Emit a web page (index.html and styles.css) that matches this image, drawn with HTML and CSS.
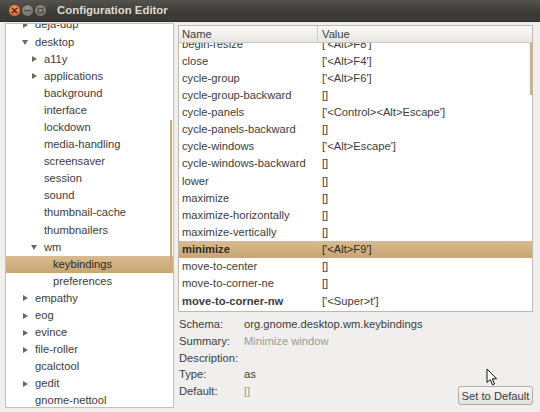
FILE: index.html
```html
<!DOCTYPE html>
<html>
<head>
<meta charset="utf-8">
<title>Configuration Editor</title>
<link rel="stylesheet" href="styles.css">
</head>
<body>
<div class="window">
  <div class="titlebar">
    <div class="wbuttons">
      <svg class="wbtn" width="13" height="13" viewBox="0 0 13 13">
        <defs>
          <radialGradient id="gc" cx="50%" cy="35%" r="65%"><stop offset="0" stop-color="#f7a073"/><stop offset="1" stop-color="#d9602a"/></radialGradient>
          <radialGradient id="gg" cx="50%" cy="35%" r="65%"><stop offset="0" stop-color="#9a9791"/><stop offset="1" stop-color="#6e6c67"/></radialGradient>
        </defs>
        <circle cx="6.5" cy="6.5" r="6" fill="url(#gc)" stroke="#3a2a20" stroke-width="0.6"/>
        <path d="M4.3 4.3 L8.7 8.7 M8.7 4.3 L4.3 8.7" stroke="#4a2a1a" stroke-width="1.5" stroke-linecap="round"/>
      </svg>
      <svg class="wbtn" width="13" height="13" viewBox="0 0 13 13">
        <circle cx="6.5" cy="6.5" r="6" fill="url(#gg)" stroke="#2f2e2b" stroke-width="0.6"/>
        <path d="M4 6.5 H9" stroke="#4a4944" stroke-width="1.7" stroke-linecap="round"/>
      </svg>
      <svg class="wbtn" width="13" height="13" viewBox="0 0 13 13">
        <circle cx="6.5" cy="6.5" r="6" fill="url(#gg)" stroke="#2f2e2b" stroke-width="0.6"/>
        <rect x="4.3" y="4.3" width="4.4" height="4.4" fill="none" stroke="#4a4944" stroke-width="1.3"/>
      </svg>
    </div>
    <div class="title">Configuration Editor</div>
  </div>

  <div class="content">
    <div class="tree-pane">
      <div class="tree-list">
        <div class="trow l0"><span class="exp"><i class="arr-right"></i></span>deja-dup</div>
        <div class="trow l0"><span class="exp"><i class="arr-down"></i></span>desktop</div>
        <div class="trow l1"><span class="exp"><i class="arr-right"></i></span>a11y</div>
        <div class="trow l1"><span class="exp"><i class="arr-right"></i></span>applications</div>
        <div class="trow l1"><span class="exp"></span>background</div>
        <div class="trow l1"><span class="exp"></span>interface</div>
        <div class="trow l1"><span class="exp"></span>lockdown</div>
        <div class="trow l1"><span class="exp"></span>media-handling</div>
        <div class="trow l1"><span class="exp"></span>screensaver</div>
        <div class="trow l1"><span class="exp"></span>session</div>
        <div class="trow l1"><span class="exp"></span>sound</div>
        <div class="trow l1"><span class="exp"></span>thumbnail-cache</div>
        <div class="trow l1"><span class="exp"></span>thumbnailers</div>
        <div class="trow l1"><span class="exp"><i class="arr-down"></i></span>wm</div>
        <div class="trow l2 selected"><span class="exp"></span>keybindings</div>
        <div class="trow l2"><span class="exp"></span>preferences</div>
        <div class="trow l0"><span class="exp"><i class="arr-right"></i></span>empathy</div>
        <div class="trow l0"><span class="exp"><i class="arr-right"></i></span>eog</div>
        <div class="trow l0"><span class="exp"><i class="arr-right"></i></span>evince</div>
        <div class="trow l0"><span class="exp"><i class="arr-right"></i></span>file-roller</div>
        <div class="trow l0"><span class="exp"></span>gcalctool</div>
        <div class="trow l0"><span class="exp"><i class="arr-right"></i></span>gedit</div>
        <div class="trow l0"><span class="exp"></span>gnome-nettool</div>
      </div>
      <div class="tree-thumb"></div>
    </div>

    <div class="right">
      <div class="table">
        <div class="thead">
          <div class="th th-name">Name</div>
          <div class="th th-value">Value</div>
        </div>
        <div class="tbody">
          <div class="tbody-inner">
            <div class="row"><span class="c-name">begin-resize</span><span class="c-value">['&lt;Alt&gt;F8']</span></div>
            <div class="row"><span class="c-name">close</span><span class="c-value">['&lt;Alt&gt;F4']</span></div>
            <div class="row"><span class="c-name">cycle-group</span><span class="c-value">['&lt;Alt&gt;F6']</span></div>
            <div class="row"><span class="c-name">cycle-group-backward</span><span class="c-value">[]</span></div>
            <div class="row"><span class="c-name">cycle-panels</span><span class="c-value">['&lt;Control&gt;&lt;Alt&gt;Escape']</span></div>
            <div class="row"><span class="c-name">cycle-panels-backward</span><span class="c-value">[]</span></div>
            <div class="row"><span class="c-name">cycle-windows</span><span class="c-value">['&lt;Alt&gt;Escape']</span></div>
            <div class="row"><span class="c-name">cycle-windows-backward</span><span class="c-value">[]</span></div>
            <div class="row"><span class="c-name">lower</span><span class="c-value">[]</span></div>
            <div class="row"><span class="c-name">maximize</span><span class="c-value">[]</span></div>
            <div class="row"><span class="c-name">maximize-horizontally</span><span class="c-value">[]</span></div>
            <div class="row"><span class="c-name">maximize-vertically</span><span class="c-value">[]</span></div>
            <div class="row selected"><span class="c-name bold">minimize</span><span class="c-value">['&lt;Alt&gt;F9']</span></div>
            <div class="row"><span class="c-name">move-to-center</span><span class="c-value">[]</span></div>
            <div class="row"><span class="c-name">move-to-corner-ne</span><span class="c-value">[]</span></div>
            <div class="row"><span class="c-name bold">move-to-corner-nw</span><span class="c-value">['&lt;Super&gt;t']</span></div>
          </div>
          <div class="table-thumb"></div>
        </div>
      </div>

      <div class="info">
        <div class="info-grid">
          <div class="lbl">Schema:</div><div class="val">org.gnome.desktop.wm.keybindings</div>
          <div class="lbl">Summary:</div><div class="val dim">Minimize window</div>
          <div class="lbl">Description:</div><div class="val"></div>
          <div class="lbl">Type:</div><div class="val">as</div>
          <div class="lbl">Default:</div><div class="val dim">[]</div>
        </div>
        <button class="btn">Set to Default</button>
      </div>
    </div>
  </div>

  <svg class="cursor" width="12" height="18" viewBox="0 0 12 18">
    <path d="M1 1 L1 14.5 L4.2 11.6 L6.6 16.8 L8.6 15.9 L6.3 10.8 L10.6 10.8 Z" fill="#ffffff" stroke="#111" stroke-width="1" stroke-linejoin="round"/>
  </svg>
</div>
</body>
</html>
```

FILE: styles.css
```css
* { box-sizing: border-box; }

html, body {
  margin: 0;
  padding: 0;
}

body {
  width: 540px;
  height: 412px;
  overflow: hidden;
  font-family: "Liberation Sans", Arial, sans-serif;
  font-size: 11.2px;
  color: #3c3c3c;
  background: #efedeb;
}

.window {
  position: relative;
  width: 540px;
  height: 412px;
  display: flex;
  flex-direction: column;
  background: #f0efed;
}

/* title bar */
.titlebar {
  height: 22px;
  flex: none;
  display: flex;
  align-items: center;
  padding-left: 8px;
  background: linear-gradient(#55534e, #3c3b37 60%, #3a3935);
  border-bottom: 1px solid #2b2a27;
}

.wbuttons {
  flex: none;
  width: 39px;
  display: flex;
  gap: 0;
  margin-top: -1px;
}

.wbtn {
  display: block;
  flex: none;
}

.title {
  flex: none;
  margin-left: 10px;
  font-weight: bold;
  font-size: 11.4px;
  color: #dfdbd2;
  margin-top: -1px;
  white-space: nowrap;
}

/* content */
.content {
  flex: 1;
  display: flex;
  gap: 4px;
  padding: 1px 7px 4px 5px;
  min-height: 0;
}

/* tree */
.tree-pane {
  position: relative;
  width: 169px;
  flex: none;
  background: #ffffff;
  border: 1px solid #c4c1ba;
  overflow: hidden;
}

.tree-list {
  margin-top: -7.6px;
}

.trow {
  height: 17.1px;
  line-height: 17.1px;
  display: flex;
  align-items: center;
  white-space: nowrap;
}

.trow.l0 { padding-left: 13px; }
.trow.l1 { padding-left: 22px; }
.trow.l2 { padding-left: 31px; }

.exp {
  width: 16px;
  flex: none;
  height: 17px;
  display: flex;
  align-items: center;
  padding-left: 3px;
}

.arr-right {
  display: block;
  width: 0;
  height: 0;
  border-top: 3.5px solid transparent;
  border-bottom: 3.5px solid transparent;
  border-left: 5px solid #6a6864;
  margin-left: 1px;
}

.arr-down {
  display: block;
  width: 0;
  height: 0;
  border-left: 3.5px solid transparent;
  border-right: 3.5px solid transparent;
  border-top: 5px solid #6a6864;
}

.selected {
  background: linear-gradient(#d8bb90, #c9a572);
  color: #2e2a24;
}

.tree-thumb {
  position: absolute;
  right: 1px;
  top: 96px;
  width: 2px;
  height: 150px;
  background: #cba97c;
}

/* right side */
.right {
  flex: 1;
  display: flex;
  flex-direction: column;
  min-width: 0;
}

.table {
  margin-top: 2px;
  height: 287px;
  flex: none;
  display: flex;
  flex-direction: column;
  background: #ffffff;
  border: 1px solid #bdb9b2;
}

.thead {
  height: 17px;
  flex: none;
  display: flex;
  background: linear-gradient(#fbfbfa, #e8e6e2);
  border-bottom: 1px solid #cac7c0;
  position: relative;
  z-index: 2;
}

.th {
  line-height: 16px;
  padding-left: 3px;
  color: #3c3c3c;
}

.th-name {
  width: 139px;
  border-right: 1px solid #cfccc5;
}

.th-value {
  flex: 1;
  padding-left: 4px;
}

.tbody {
  position: relative;
  flex: 1;
  overflow: hidden;
}

.tbody-inner {
  margin-top: -7.5px;
}

.row {
  height: 17.15px;
  line-height: 17.15px;
  display: flex;
  white-space: nowrap;
}

.c-name {
  width: 139px;
  flex: none;
  padding-left: 3px;
}

.c-value {
  flex: 1;
  padding-left: 4px;
}

.bold { font-weight: bold; }

.table-thumb {
  position: absolute;
  right: 0;
  top: 0;
  width: 2px;
  height: 52px;
  background: #d0ae80;
  z-index: 3;
}

/* info */
.info {
  flex: 1;
  display: flex;
  justify-content: space-between;
  align-items: flex-end;
  padding: 4px 0 3px 1px;
}

.info-grid {
  align-self: flex-start;
  display: grid;
  grid-template-columns: 65px auto;
  grid-auto-rows: 16.75px;
  line-height: 16.75px;
  white-space: nowrap;
}

.lbl { color: #3c3c3c; }
.val { color: #3c3c3c; }
.dim { color: #9c9a96; }

.btn {
  font-family: "Liberation Sans", Arial, sans-serif;
  font-size: 11.2px;
  color: #3c3c3c;
  height: 19px;
  width: 75px;
  padding: 0;
  border: 1px solid #aeaaa3;
  border-radius: 3px;
  background: linear-gradient(#f7f6f5, #e4e2de);
}

.cursor {
  position: absolute;
  left: 486px;
  top: 368px;
}
```
